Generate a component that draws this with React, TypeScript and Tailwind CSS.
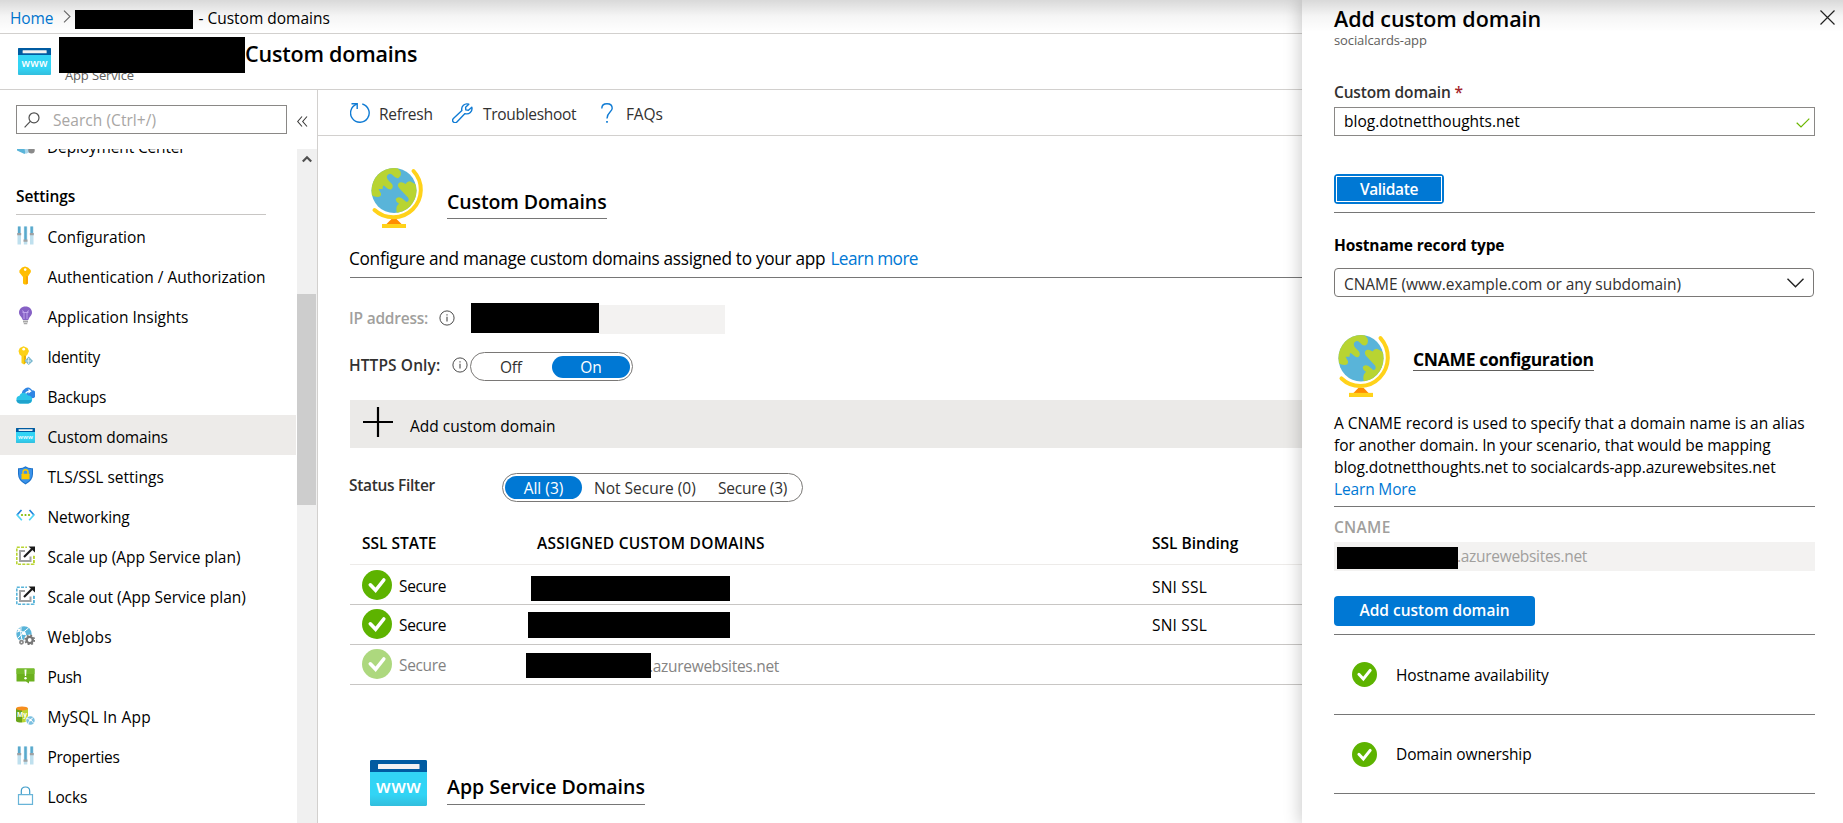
import React, { useId } from "react";

type IconProps = { className?: string };

/* ---------- Icons ---------- */

function WwwIcon({ className = "" }: IconProps) {
  const id = useId();
  return (
    <svg viewBox="0 0 57 46" className={className} preserveAspectRatio="none">
      <defs>
        <linearGradient id={id} x1="0" y1="0" x2="0" y2="1">
          <stop offset="0" stopColor="#32d4f5" />
          <stop offset="0.75" stopColor="#32d4f5" />
          <stop offset="1" stopColor="#32bedd" />
        </linearGradient>
      </defs>
      <rect width="57" height="46" rx="1.5" fill={`url(#${id})`} />
      <path d="M1.5 0h54A1.5 1.5 0 0 1 57 1.5V12H0V1.5A1.5 1.5 0 0 1 1.5 0z" fill="#005ba1" />
      <rect x="8" y="4" width="41.500" height="5" rx="0.600" fill="#f2f2f2" />
      <text x="28.500" y="33" textAnchor="middle" fontFamily="Open Sans" fontWeight="600" fontSize="18" textLength="45" fill="#fff">
        www
      </text>
    </svg>
  );
}

function GlobeIcon({ className = "" }: IconProps) {
  const id = useId();
  return (
    <svg viewBox="0 0 54 60" className={className} preserveAspectRatio="none">
      <defs>
        <clipPath id={id}>
          <circle cx="23" cy="22.500" r="22.500" />
        </clipPath>
      </defs>
      <circle cx="23" cy="22.500" r="22.500" fill="#59b4d9" />
      <g clipPath={`url(#${id})`} fill="#b8d432">
        <path d="M-2 -2H25L29.500 3.500Q31 8 27.500 10Q25 11 21.500 7Q18.500 4.500 16.200 7.500Q15 10 17.500 12.500L21 16Q23 19.500 20 21.500Q17.500 22 13.500 18L12 17.500L11.500 21L7.500 21L10 25.500Q10.500 29 6.500 29Q3 29 -2 26z" />
        <path d="M48 18L39.500 13.500Q37 12.500 34.500 16Q31.500 13.500 28.500 14.500Q25.500 16.500 28 20L37 29.500Q39 33 35.500 34L30.500 30Q26.500 28 24.800 31Q24.500 33.500 28 35.500L26 38Q24.500 41 26.500 48H48z" />
      </g>
      <path d="M20.500 51h5l6 6H14.500z" fill="#ff8c00" />
      <path d="M42.500 3A27.600 27.600 0 0 1 3.500 42" fill="none" stroke="#ffd21a" strokeWidth="4" strokeLinecap="round" />
      <rect x="11" y="56" width="24" height="4" fill="#ffd21a" />
    </svg>
  );
}

function CheckCircle({ className = "" }: IconProps) {
  return (
    <svg viewBox="0 0 30 30" className={className} preserveAspectRatio="none">
      <circle cx="15" cy="15" r="15" fill="#5db300" />
      <path d="M8.300 14.800L13.600 20.300L21.800 10" fill="none" stroke="#fff" strokeWidth="3.600" strokeLinecap="round" />
    </svg>
  );
}

function InfoIcon({ className = "" }: IconProps) {
  return (
    <svg viewBox="0 0 16 16" className={className} fill="none" stroke="#4a4a4a">
      <circle cx="8" cy="8" r="7.100" />
      <path d="M8 6.800V11.500M8 4.300V5.500" strokeWidth="1.100" />
    </svg>
  );
}

function SlidersIcon() {
  return (
    <svg viewBox="0 0 19 19" className="size-[19px]">
      <path d="M1.500 .5h3.500v18H1.500zM7.800 .5h3.500v18H7.800zM14 .5h3.500v18H14z" fill="#bfe0ee" />
      <path d="M2 .5h2.400v8H2zM8.300 .5h2.400v14H8.300zM14.500 .5h2.400v8h-2.400z" fill="#59a9cc" />
      <path d="M1.200 7h4v2.200h-4zM7.500 13.500h4v2.200h-4zM13.800 7h4v2.200h-4z" fill="#a0a1a2" />
    </svg>
  );
}

function KeyIcon() {
  return (
    <svg viewBox="0 0 19 19" className="size-[19px]">
      <path d="M9 .5L12 1.500L14.700 4L14.900 6L11.800 10.800V17.500L10.300 18.600H8.500L7 17.500V11L3.400 6.500V4.500L6 1.500z" fill="#ffbe00" />
      <path d="M11.800 10.500V17.500L10.300 18.600V10z" fill="#f59d00" />
      <circle cx="9.200" cy="3.600" r="1.300" fill="#fff" />
    </svg>
  );
}

function BulbIcon() {
  return (
    <svg viewBox="0 0 19 19" className="size-[19px]">
      <path d="M9.500 .5C13.500 .5 16 3.200 16 6.500C16 9.800 13 10.800 12.300 14H6.800C6 10.800 3 9.800 3 6.500C3 3.200 5.500 .5 9.500 .5z" fill="#8661c5" />
      <path d="M6 4.800Q7.800 4.800 8 6.500V13M13 4.800Q11.200 4.800 11 6.500V13M6.500 6.500h6" fill="none" stroke="#c3a9ee" strokeWidth="0.900" />
      <path d="M7 14.500h5v2h-5zM7.800 17h3.500v1.300H7.800z" fill="#a8a8a8" />
    </svg>
  );
}

function IdentityIcon() {
  return (
    <svg viewBox="0 0 19 19" className="size-[19px]">
      <path d="M7.500 .2L11.500 2L13 5L11.500 8.500L10 10V13L8.700 14.500L10 16.500L8 18.500L5.500 17V10L3.500 8.500L2.500 5L3.800 2z" fill="#fcd116" />
      <path d="M10 10V13L8.700 14.500L10 16.500L8 18.500V9.500z" fill="#eab200" />
      <circle cx="7.700" cy="3.200" r="1.400" fill="#fff" />
      <path d="M12.700 10.500L17 15L12.700 19L8.500 15z" fill="#7ab8cf" />
      <path d="M12.700 12V18M10.500 15h4.500" stroke="#e8f5fa" strokeWidth="0.900" />
    </svg>
  );
}

function BackupsIcon() {
  return (
    <svg viewBox="0 0 19 19" className="size-[19px]">
      <path d="M6.500 9A4 4 0 0 1 8 3.500A4.700 4.700 0 0 1 16 4.200A4 4 0 0 1 15.500 12.300H9z" fill="#2f86e4" />
      <path d="M9.500 8.500Q9.800 5.300 13.500 5.300" stroke="#fff" strokeWidth="1.200" fill="none" />
      <path d="M12.500 2.800L15.600 5.300L12.500 7.600z" fill="#fff" />
      <path d="M4 17.500A3.900 3.900 0 0 1 3.500 9.800A4.600 4.600 0 0 1 12 9.500A4 4 0 0 1 12.300 17.500z" fill="#2cc3e8" />
      <path d="M.5 14A3.800 3.800 0 0 0 4 17.500H12.300A3.800 3.800 0 0 0 15.500 14z" fill="#1fa3cd" />
    </svg>
  );
}

function ShieldIcon() {
  return (
    <svg viewBox="0 0 19 19" className="size-[19px]">
      <path d="M9.500 .3Q12.500 2.500 17 2.200V8Q17 14.500 9.500 18.500Q2 14.500 2 8V2.200Q6.500 2.500 9.500 .3z" fill="#1c72ca" />
      <path d="M9.500 1.500Q12.500 3.300 16 3.200V8Q16 13.500 9.500 17.200Q3 13.500 3 8V3.200Q6.500 3.300 9.500 1.500z" fill="#3a92ea" />
      <path d="M7 8V6Q7 3.800 9.500 3.800T12 6V8" fill="none" stroke="#fbc800" strokeWidth="1.400" />
      <rect x="5.500" y="7.700" width="8" height="5.600" rx="0.600" fill="#fbc800" />
    </svg>
  );
}

function NetworkingIcon() {
  return (
    <svg viewBox="0 0 19 19" className="size-[19px]" fill="none">
      <path d="M5.500 4L1 9" stroke="#1f83dc" strokeWidth="1.700" />
      <path d="M.7 8.500L5.800 14.300" stroke="#4fd4f5" strokeWidth="1.700" />
      <path d="M13.500 4L18 9" stroke="#1f83dc" strokeWidth="1.700" />
      <path d="M18.300 8.500L13.200 14.300" stroke="#4fd4f5" strokeWidth="1.700" />
      <g fill="#7fba00">
        <circle cx="6" cy="9" r="1.100" />
        <circle cx="9.500" cy="9" r="1.100" />
        <circle cx="13" cy="9" r="1.100" />
      </g>
    </svg>
  );
}

function ScaleIcon({ color }: { color: string }) {
  return (
    <svg viewBox="0 0 19 19" className="size-[19px]" fill="none">
      <rect x="0.800" y="1.300" width="17" height="17" stroke={color} strokeWidth="1.600" strokeDasharray="3 1.250" />
      <path d="M11 0H19V9H11z" fill="#fff" />
      <path d="M9 5H4V15H14.500V10.500" stroke="#a0a1a2" strokeWidth="2" />
      <path d="M8 11L16 3" stroke="#1a1a1a" strokeWidth="2.200" />
      <path d="M12.500 .5H19V6.500z" fill="#1a1a1a" />
      <path d="M18 10V19" stroke={color} strokeWidth="1.600" strokeDasharray="3 1.250" />
    </svg>
  );
}

function WebJobsIcon() {
  return (
    <svg viewBox="0 0 19 19" className="size-[19px]">
      <circle cx="8" cy="8" r="7.700" fill="#59b4d9" />
      <path d="M1 6Q6 3.500 10 9Q12 12 11 15M5 1Q4 8 6 14M12.500 2Q8 5 2 12" fill="none" stroke="#fff" strokeWidth="1" />
      <circle cx="7.800" cy="7.200" r="1.900" fill="#fff" />
      <circle cx="3" cy="3.800" r="1.300" fill="#fff" />
      <circle cx="13.500" cy="14" r="5.500" fill="#fff" />
      <circle cx="13.700" cy="14" r="3.100" fill="none" stroke="#767676" strokeWidth="2.400" />
      <circle cx="13.700" cy="14" r="4.700" fill="none" stroke="#767676" strokeWidth="1.500" strokeDasharray="1.900 1.790" />
      <circle cx="5.500" cy="16.200" r="2.900" fill="#fff" />
      <circle cx="5.500" cy="16.200" r="1.600" fill="none" stroke="#8a8a8a" strokeWidth="1.700" />
    </svg>
  );
}

function PushIcon() {
  return (
    <svg viewBox="0 0 19 19" className="size-[19px]">
      <path d="M1 2.500H18Q18.500 2.500 18.500 3V15Q18.500 15.500 18 15.500H13V17.500L10 15.500H1Q.5 15.500 .5 15V3Q.5 2.500 1 2.500z" fill="#6bb01e" />
      <path d="M1 2.500H18Q18.500 2.500 18.500 3V8H.5V3Q.5 2.500 1 2.500z" fill="#76bc2d" />
      <path d="M8.500 3.500h2l-.4 6.500h-1.200z" fill="#fff" />
      <circle cx="9.500" cy="12.300" r="1.200" fill="#fff" />
    </svg>
  );
}

function MySqlIcon() {
  return (
    <svg viewBox="0 0 19 19" className="size-[19px]">
      <path d="M0 2.500H6V16.500Q1 16.500 0 15z" fill="#6ba61b" />
      <path d="M6 2.500H12V14Q10 16.500 6 16.500z" fill="#b8d432" />
      <ellipse cx="6" cy="2.400" rx="6" ry="2" fill="#f78d1e" />
      <text x="6" y="10.500" textAnchor="middle" fontFamily="Open Sans" fontWeight="700" fontSize="6.500" fill="#fff">
        My
      </text>
      <circle cx="14.500" cy="14.500" r="4.900" fill="#fff" />
      <circle cx="14.500" cy="14.500" r="4.200" fill="#7cc0e0" />
      <path d="M11 12.500Q15 12 17.500 17M17.500 11.500Q13 13 12 18" fill="none" stroke="#fff" strokeWidth="0.900" />
      <circle cx="14.600" cy="14.200" r="1.100" fill="#fff" />
    </svg>
  );
}

function LockIcon() {
  return (
    <svg viewBox="0 0 19 19" className="size-[19px]" fill="none" stroke="#3f9cc9" strokeWidth="1.200">
      <path d="M5.300 8.500V5Q5.300 1 9.500 1T13.700 5V8.500" />
      <path d="M2.500 8.600H16.500V18.300H2.500z" stroke="#68b4d8" />
    </svg>
  );
}

function DeploymentIcon() {
  return (
    <svg viewBox="0 0 19 19" className="size-[19px]">
      <path d="M1 8H13V13L8.500 18L1 14.500z" fill="#59b4d9" />
      <path d="M8 10H14V16L9.500 18z" fill="#a9d5ea" />
      <circle cx="15.500" cy="14.300" r="3.200" fill="#8a8a8a" />
    </svg>
  );
}

function SearchIcon() {
  return (
    <svg viewBox="0 0 16 16" className="size-4" fill="none" stroke="#4f4f4f" strokeWidth="1.200">
      <circle cx="10" cy="5.800" r="5" />
      <path d="M6.300 9.400L.6 15.400" />
    </svg>
  );
}

function RefreshIcon() {
  return (
    <svg viewBox="0 0 20 20" className="size-5" fill="none" stroke="#0f7bd4" strokeWidth="1.400">
      <path d="M12.300 1A9.300 9.300 0 1 1 6.800 1.200" />
      <path d="M1.500 .8H7.200V6" />
    </svg>
  );
}

function WrenchIcon() {
  return (
    <svg viewBox="0 0 21 20" className="h-5 w-[21px]" fill="none" stroke="#0f7bd4" strokeWidth="1.400" strokeLinejoin="round">
      <path d="M16.800 1.200A5.300 5.300 0 0 0 9.900 7.600L1.400 15.400A2.300 2.300 0 0 0 4.900 18.900L13 10.600A5.300 5.300 0 0 0 19.800 4.200L16.400 7.300L13.800 6.900L13.600 4.300z" />
    </svg>
  );
}

function QuestionIcon() {
  return (
    <svg viewBox="0 0 12 20" className="h-5 w-3" fill="none" stroke="#0f7bd4" strokeWidth="1.400">
      <path d="M.8 5.500Q.8 .8 6 .8T11.200 5.300C11.200 9 6 9.500 6 15.500" />
      <path d="M6 18V19.800" strokeWidth="1.700" />
    </svg>
  );
}

/* ---------- Sidebar ---------- */

const menu: { label: string; tracking: string; icon: React.ReactNode; active?: boolean }[] = [
  { label: "Configuration", tracking: "tracking-[-0.05px]", icon: <SlidersIcon /> },
  { label: "Authentication / Authorization", tracking: "tracking-[0px]", icon: <KeyIcon /> },
  { label: "Application Insights", tracking: "tracking-[0px]", icon: <BulbIcon /> },
  { label: "Identity", tracking: "tracking-[-0.3px]", icon: <IdentityIcon /> },
  { label: "Backups", tracking: "tracking-[-0.3px]", icon: <BackupsIcon /> },
  { label: "Custom domains", tracking: "tracking-[-0.15px]", icon: <WwwIcon className="h-[15px] w-[19px]" />, active: true },
  { label: "TLS/SSL settings", tracking: "tracking-[0px]", icon: <ShieldIcon /> },
  { label: "Networking", tracking: "tracking-[-0.15px]", icon: <NetworkingIcon /> },
  { label: "Scale up (App Service plan)", tracking: "tracking-[0px]", icon: <ScaleIcon color="#b8d432" /> },
  { label: "Scale out (App Service plan)", tracking: "tracking-[0px]", icon: <ScaleIcon color="#59b4d9" /> },
  { label: "WebJobs", tracking: "tracking-[0.2px]", icon: <WebJobsIcon /> },
  { label: "Push", tracking: "tracking-[-0.4px]", icon: <PushIcon /> },
  { label: "MySQL In App", tracking: "tracking-[0.2px]", icon: <MySqlIcon /> },
  { label: "Properties", tracking: "tracking-[-0.3px]", icon: <SlidersIcon /> },
  { label: "Locks", tracking: "tracking-[-0.15px]", icon: <LockIcon /> },
];

function MenuRow({ label, tracking, icon, active }: (typeof menu)[number]) {
  return (
    <li className={`flex h-10 shrink-0 items-center pl-4 ${active ? "bg-[#edebe9]" : ""}`}>
      <span className="flex w-[19px] justify-center">{icon}</span>
      <span className={`ml-[12.5px] pt-[3px] whitespace-nowrap ${tracking}`}>{label}</span>
    </li>
  );
}

function Sidebar() {
  return (
    <nav className="flex w-[318px] shrink-0 flex-col border-r border-[#d2d0ce]">
      <div className="flex h-[59px] shrink-0 pt-[15px] pl-4">
        <div className="flex h-[29px] w-[271px] items-center border border-[#8a8886] pl-[7px]">
          <SearchIcon />
          <span className="ml-[13px] tracking-[0.05px] text-[#a8a6a4]">Search (Ctrl+/)</span>
        </div>
        <svg viewBox="0 0 11 11" className="mt-[11px] ml-2.5 size-[11px]" fill="none" stroke="#3b3a39" strokeWidth="1.100">
          <path d="M5 .5L.7 5.500L5 10.500M10 .5L5.700 5.500L10 10.500" />
        </svg>
      </div>
      <div className="flex min-h-0 flex-1">
        <ul className="flex w-[296px] flex-col overflow-hidden">
          <li className="-mt-6 flex h-10 shrink-0 items-center pl-4">
            <DeploymentIcon />
            <span className="ml-3 pt-1 tracking-[-0.15px]">Deployment Center</span>
          </li>
          <li className="mr-[30px] ml-4 flex h-[50px] shrink-0 items-center border-b border-[#c8c6c4] pt-[12px] font-semibold tracking-[-0.1px]">Settings</li>
          {menu.map((m) => (
            <MenuRow key={m.label} {...m} />
          ))}
        </ul>
        <div className="ml-px flex w-5 flex-col items-center bg-[#f0f0f0]">
          <svg viewBox="0 0 10 8" className="mt-[6px] h-2 w-2.5 shrink-0" fill="none" stroke="#505050" strokeWidth="2.200">
            <path d="M.8 6.500L5 2.200L9.200 6.500" />
          </svg>
          <div className="mt-[131px] mr-px h-[211px] w-[19px] shrink-0 bg-[#cdcdcd]" />
        </div>
      </div>
    </nav>
  );
}

/* ---------- Main ---------- */

function Toolbar() {
  return (
    <div className="flex h-[46px] shrink-0 items-start border-b border-[#d2d0ce] pt-[13px] pl-8 text-[#323130]">
      <RefreshIcon />
      <span className="ml-[9px] w-[73px] leading-[22px] tracking-[-0.25px]">Refresh</span>
      <WrenchIcon />
      <span className="ml-2.5 w-[118px] leading-[22px] tracking-[-0.3px]">Troubleshoot</span>
      <QuestionIcon />
      <span className="ml-[13px] leading-[22px] tracking-[-0.15px]">FAQs</span>
    </div>
  );
}

function StateCell({ faded, gap }: { faded?: boolean; gap: string }) {
  return (
    <div className={`flex h-[30px] w-[164px] items-center pl-3 ${gap} ${faded ? "opacity-50" : ""}`}>
      <CheckCircle className="size-[30px]" />
      <span className="ml-[7px] pt-0.5 tracking-[-0.35px]">Secure</span>
    </div>
  );
}

function DomainTable() {
  return (
    <section className="flex flex-col">
      <div className="flex h-[41px] items-start border-b border-[#edebe9] pt-[7px] leading-6 font-semibold">
        <span className="w-[175px] pl-3">SSL STATE</span>
        <span className="ml-3 w-[615px] tracking-[0.25px]">ASSIGNED CUSTOM DOMAINS</span>
        <span>SSL Binding</span>
      </div>
      <div className="flex h-10 items-start border-b border-[#c8c6c4]">
        <StateCell gap="mt-[5px]" />
        <span className="mt-[11px] ml-[17px] h-[25px] w-[199px] bg-black" />
        <span className="mt-[10px] ml-[72px] pl-[350px] leading-6 tracking-[0.2px]">SNI SSL</span>
      </div>
      <div className="flex h-10 items-start border-b border-[#c8c6c4]">
        <StateCell gap="mt-1" />
        <span className="mt-[7px] ml-3.5 h-[26px] w-[202px] bg-black" />
        <span className="mt-2 ml-[72px] pl-[350px] leading-6 tracking-[0.2px]">SNI SSL</span>
      </div>
      <div className="flex h-10 items-start border-b border-[#c8c6c4]">
        <StateCell faded gap="mt-1" />
        <span className="z-10 mt-2 ml-3 h-[25px] w-[125px] bg-black" />
        <span className="mt-[9px] -ml-0.5 leading-6 tracking-[-0.3px] text-[#858483]">.azurewebsites.net</span>
      </div>
    </section>
  );
}

function Main() {
  return (
    <main className="flex min-w-0 flex-1 flex-col">
      <Toolbar />
      <div className="flex flex-1 flex-col overflow-hidden pl-8">
        <div className="flex h-[102px] shrink-0 pt-8 pl-[21px]">
          <GlobeIcon className="h-[60px] w-[54px]" />
          <h2 className="mt-[17px] ml-[22px] h-[34px] border-b border-[#767676] text-[19.5px] leading-[33px] font-semibold tracking-[-0.1px]">Custom Domains</h2>
        </div>
        <p className="h-10 shrink-0 border-b border-[#767676] pt-[7px] text-[17.25px] leading-[28px] tracking-[-0.31px]">
          <span className="-ml-px">Configure and manage custom domains assigned to your app</span>{" "}
          <a className="ml-px tracking-[-0.6px] text-[#0078d4]">Learn more</a>
        </p>
        <div className="mt-[25px] flex h-[31px] shrink-0">
          <span className="-ml-px pt-0.5 leading-[26px] font-semibold tracking-[-0.22px] text-[#a19f9d]">IP address:</span>
          <InfoIcon className="mt-[7px] ml-[11px] size-4" />
          <span className="ml-auto h-[30px] w-32 bg-black" />
          <span className="mt-0.5 mr-[577px] h-[29px] w-[126px] bg-[#f3f2f1]" />
        </div>
        <div className="mt-[18px] flex h-[29px] shrink-0">
          <span className="-ml-px w-[103px] leading-[27px] font-semibold tracking-[0.1px] text-[#323130]">HTTPS Only:</span>
          <InfoIcon className="mt-[5px] size-4" />
          <div className="ml-[2px] flex h-[29px] w-[163px] items-center rounded-full border border-[#7a7876] px-[2px] text-[#323130]">
            <span className="w-[79px] pt-px pl-[27px] tracking-[-0.2px]">Off</span>
            <span className="flex h-[22px] w-[78px] items-center justify-center rounded-full bg-[#0078d4] pt-px text-white">On</span>
          </div>
        </div>
        <div className="mt-[19px] flex h-12 shrink-0 bg-[#ebeae8] pl-[13px]">
          <svg viewBox="0 0 30 30" className="mt-[7px] size-[30px]" stroke="#000" strokeWidth="2.200">
            <path d="M15 0V30M0 15H30" />
          </svg>
          <span className="ml-[17px] pt-[13px] leading-[26px]">Add custom domain</span>
        </div>
        <div className="mt-[25px] flex h-[29px] shrink-0 text-[#323130]">
          <span className="-ml-px w-[153px] leading-6 font-semibold tracking-[-0.3px]">Status Filter</span>
          <div className="flex h-[29px] w-[301px] items-center rounded-full border border-[#7a7876] pl-0.5">
            <span className="flex h-[23px] w-[77px] shrink-0 items-center justify-center rounded-full bg-[#0078d4] text-white">All (3)</span>
            <span className="w-[136px] shrink-0 pl-3">Not Secure (0)</span>
            <span className="tracking-[-0.2px] whitespace-nowrap">Secure (3)</span>
          </div>
        </div>
        <div className="mt-[22px]">
          <DomainTable />
        </div>
        <div className="mt-[75px] flex shrink-0 pl-5">
          <WwwIcon className="h-[46px] w-[57px]" />
          <h2 className="mt-[10px] ml-5 h-[35px] border-b border-[#767676] text-[19.5px] leading-[34px] font-semibold">App Service Domains</h2>
        </div>
      </div>
    </main>
  );
}

/* ---------- Right panel ---------- */

function AddDomainPanel() {
  return (
    <aside className="relative flex w-[541px] shrink-0 flex-col bg-white pr-7 pl-8 shadow-[0_0_16px_2px_rgba(0,0,0,0.2)]">
      <div className="flex h-[85px] shrink-0 flex-col">
        <h1 className="pt-[3px] text-[21.5px] leading-[32px] font-semibold tracking-[-0.07px]">Add custom domain</h1>
        <span className="-mt-[3px] text-[13px] leading-4 tracking-[-0.1px] text-[#605e5c]">socialcards-app</span>
        <svg viewBox="0 0 15 15" className="absolute top-2.5 right-2 size-[15px]" fill="none" stroke="#222" strokeWidth="1.200">
          <path d="M.5 .5L14.500 14.500M14.500 .5L.5 14.500" />
        </svg>
      </div>
      <label className="h-[22px] leading-[15px] font-semibold tracking-[-0.15px] text-[#323130]">
        Custom domain <span className="text-[#a4262c]">*</span>
      </label>
      <div className="flex h-[29px] shrink-0 items-center justify-between border border-[#8a8886] pr-1 pl-[9px]">
        <span className="pb-px">blog.dotnetthoughts.net</span>
        <svg viewBox="0 0 14 10" className="mt-0.5 h-2.5 w-3.5" fill="none" stroke="#6bb700" strokeWidth="1.200">
          <path d="M.7 4.800L5 9L13.300 .7" />
        </svg>
      </div>
      <div className="mt-[38px] h-[39px] border-b border-[#767676]">
        <button className="flex h-[30px] w-[110px] rounded-sm bg-[#0078d4] p-0.5 font-semibold tracking-[-0.35px] text-white">
          <span className="flex h-full w-full items-center justify-center border border-white pb-px">Validate</span>
        </button>
      </div>
      <h3 className="mt-[20px] h-[35px] leading-[24px] font-bold tracking-[-0.13px]">Hostname record type</h3>
      <div className="flex h-[29px] w-[480px] shrink-0 items-center justify-between rounded-sm border border-[#7a7876] pr-[9px] pl-[9px]">
        <span className="pt-[3px] tracking-[-0.06px] text-[#323130]">CNAME (www.example.com or any subdomain)</span>
        <svg viewBox="0 0 17 10" className="h-2.5 w-[17px]" fill="none" stroke="#222" strokeWidth="1.400">
          <path d="M.5 .8L8.500 8.800L16.500 .8" />
        </svg>
      </div>
      <div className="mt-[38px] flex h-[75px] shrink-0 pl-1">
        <GlobeIcon className="h-[62px] w-[54px]" />
        <h3 className="mt-[10px] ml-[21px] h-[26px] border-b border-[#605e5c] text-[17.5px] leading-[28px] font-bold tracking-[-0.33px]">CNAME configuration</h3>
      </div>
      <div className="h-[97px] shrink-0 border-b border-[#767676] pt-0.5 leading-[22px] whitespace-nowrap">
        <p>A CNAME record is used to specify that a domain name is an alias</p>
        <p className="tracking-[-0.08px]">for another domain. In your scenario, that would be mapping</p>
        <p className="tracking-[-0.08px]">blog.dotnetthoughts.net to socialcards-app.azurewebsites.net</p>
        <a className="tracking-[-0.15px] text-[#0078d4]">Learn More</a>
      </div>
      <span className="mt-[10px] h-[25px] leading-[20px] font-semibold tracking-[0.3px] text-[#a19f9d]">CNAME</span>
      <div className="flex h-[29px] shrink-0 bg-[#f3f2f1] pl-[3px]">
        <span className="z-10 mt-[5px] h-[22px] w-[121px] bg-black" />
        <span className="-ml-px leading-7 tracking-[-0.3px] text-[#a19f9d]">.azurewebsites.net</span>
      </div>
      <div className="mt-[25px] h-[39px] shrink-0 border-b border-[#767676]">
        <button className="flex h-[30px] w-[201px] items-center justify-center rounded-sm bg-[#0078d4] pb-0.5 font-semibold text-white">Add custom domain</button>
      </div>
      {[
        { label: "Hostname availability", style: "h-20 tracking-[-0.1px]" },
        { label: "Domain ownership", style: "h-[79px] tracking-[-0.1px]" },
      ].map((r) => (
        <div key={r.label} className={`flex shrink-0 items-center border-b border-[#767676] pl-[18px] ${r.style}`}>
          <CheckCircle className="h-[25px] w-[25px]" />
          <span className="ml-[19px]">{r.label}</span>
        </div>
      ))}
    </aside>
  );
}

/* ---------- Page ---------- */

export default function App() {
  return (
    <div className="relative flex h-[823px] w-[1843px] overflow-hidden bg-white font-['Open_Sans',sans-serif] text-[15.5px] leading-[22px] text-black">
      <div className="flex w-[1302px] shrink-0 flex-col">
        <div className="flex h-[34px] shrink-0 items-center border-b border-[#d2d0ce] pl-[10px]">
          <a className="pt-0.5 tracking-[-0.1px] text-[#0078d4]">Home</a>
          <svg viewBox="0 0 8 13" className="mr-[3px] ml-2.5 h-[13px] w-2" fill="none" stroke="#6b6b6b" strokeWidth="1.100">
            <path d="M1 .7L7 6.500L1 12.300" />
          </svg>
          <span className="mt-1.5 ml-px h-[19px] w-[118px] bg-black" />
          <span className="ml-[5px] pt-0.5">- Custom domains</span>
        </div>
        <header className="flex h-[56px] shrink-0 border-b border-[#d2d0ce] pl-[18px]">
          <WwwIcon className="mt-3.5 h-[27px] w-[33px]" />
          <div className="ml-2 flex flex-col pt-[3px]">
            <div className="z-10 flex h-9">
              <span className="h-9 w-[186px] bg-black" />
              <h1 className="text-[21.5px] leading-[34px] font-semibold tracking-[-0.2px]">Custom domains</h1>
            </div>
            <span className="-mt-[6px] ml-1.5 text-[13px] leading-4 tracking-[-0.15px] text-[#605e5c]">App Service</span>
          </div>
        </header>
        <div className="flex min-h-0 flex-1">
          <Sidebar />
          <Main />
        </div>
      </div>
      <AddDomainPanel />
      <div className="pointer-events-none absolute inset-x-0 top-0 h-8 bg-linear-to-b from-black/15 via-black/4 to-transparent" />
    </div>
  );
}
